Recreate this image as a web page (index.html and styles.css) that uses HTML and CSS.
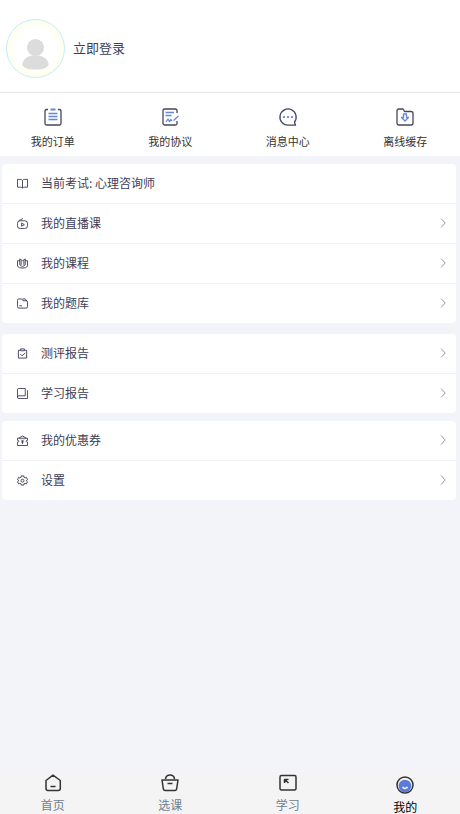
FILE: index.html
```html
<!DOCTYPE html>
<html lang="zh-CN">
<head>
<meta charset="utf-8">
<meta name="viewport" content="width=device-width, initial-scale=1">
<title>我的</title>
<link rel="stylesheet" href="styles.css">
</head>
<body>
<main>
  <header class="profile">
    <span class="avatar">
      <svg viewBox="0 0 60 60" aria-hidden="true"><circle cx="30" cy="29" r="9"/><path d="M16 47c1-7 7-10 14-10s13 3 14 10c-2 4-7 5-14 5s-12-1-14-5z"/></svg>
    </span>
    <a class="login" href="#">立即登录</a>
  </header>

  <nav class="quick">
    <a href="#">
      <svg class="icon" viewBox="0 0 20 20" aria-hidden="true"><path d="M5 2.500H3.500q-1.500 0-1.500 1.500V16.500q0 1.500 1.500 1.500h13q1.500 0 1.500-1.500V4q0-1.500-1.500-1.500H15"/><path class="blue thick" d="M7.500 2.500h5"/><path class="blue" d="M5.500 6.500h9M5.500 9.500h9M5.500 12.500h9"/></svg>
      <span>我的订单</span>
    </a>
    <a href="#">
      <svg class="icon" viewBox="0 0 20 20" aria-hidden="true"><path d="M17 6V3.500q0-1.500-1.500-1.500h-11Q3 2 3 3.500v13Q3 18 4.500 18h11q1.500 0 1.500-1.500V14"/><path class="blue" d="M5.500 5.500h8.500M5.500 8.500h6M6 15l2-3 1.500 2.500 1.500-2L12 14M13.500 13.500l5-4.500"/></svg>
      <span>我的协议</span>
    </a>
    <a href="#">
      <svg class="icon" viewBox="0 0 20 20" aria-hidden="true"><path d="M17.500 18.200H10A8.100 8.100 0 1 1 16.500 15z"/><g class="dots"><circle cx="6" cy="10" r="1.100"/><circle cx="10" cy="10" r="1.100"/><circle cx="14" cy="10" r="1.100"/></g></svg>
      <span>消息中心</span>
    </a>
    <a href="#">
      <svg class="icon" viewBox="0 0 20 20" aria-hidden="true"><path d="M2 4q0-2 2-2h3.500q1 0 1.500 1.500l.5 1H16q2 0 2 2V16q0 2-2 2H4q-2 0-2-2z"/><path class="blue" d="M8.500 7h3v3.500h2L10 14 6.500 10.500h2z"/></svg>
      <span>离线缓存</span>
    </a>
  </nav>

  <div class="groups">
    <section class="card">
      <a class="row" href="#">
        <svg class="glyph" viewBox="0 0 12 12" aria-hidden="true"><path d="M6 2.500Q5 1.500 3.500 1.500H.5v8.500h3Q5 10 6 11q1-1 2.500-1h3V1.500h-3Q7 1.500 6 2.500V11"/></svg>
        <span>当前考试: 心理咨询师</span>
      </a>
      <a class="row" href="#">
        <svg class="glyph" viewBox="0 0 12 12" aria-hidden="true"><rect x=".5" y="3" width="11" height="8.500" rx="3"/><path d="M2 3l4.500-2.500M5 5.500v3.500l3-1.700z"/></svg>
        <span>我的直播课</span>
        <svg class="chevron" viewBox="0 0 6 10" aria-hidden="true"><path d="M1 .5L5.200 5 1 9.500"/></svg>
      </a>
      <a class="row" href="#">
        <svg class="glyph" viewBox="0 0 12 12" aria-hidden="true"><path d="M6 3L3 1v6.500L6 9.500 9 7.500V1L6 3M4.500 2.500v5M7.500 2.500v5M3 3H.5v6Q2 11 6 11t5.500-2V3H9"/></svg>
        <span>我的课程</span>
        <svg class="chevron" viewBox="0 0 6 10" aria-hidden="true"><path d="M1 .5L5.200 5 1 9.500"/></svg>
      </a>
      <a class="row" href="#">
        <svg class="glyph" viewBox="0 0 12 12" aria-hidden="true"><path d="M.5 2.500q0-1.500 1.500-1.500h3l1.500 2H10q1.500 0 1.500 1.500V9.500q0 1.500-1.500 1.500H2Q.5 11 .5 9.500zM6 1h3l2 2.500M2.500 8.500h3"/></svg>
        <span>我的题库</span>
        <svg class="chevron" viewBox="0 0 6 10" aria-hidden="true"><path d="M1 .5L5.200 5 1 9.500"/></svg>
      </a>
    </section>

    <section class="card spaced">
      <a class="row" href="#">
        <svg class="glyph" viewBox="0 0 12 12" aria-hidden="true"><path d="M4 2.500H1.500v8.500h9V2.500H8M4 1h4v2H4zM3.500 6.500l2 2 3.500-3"/></svg>
        <span>测评报告</span>
        <svg class="chevron" viewBox="0 0 6 10" aria-hidden="true"><path d="M1 .5L5.200 5 1 9.500"/></svg>
      </a>
      <a class="row" href="#">
        <svg class="glyph" viewBox="0 0 12 12" aria-hidden="true"><path d="M2 .5h7v8H2q-1.500 0-1.500 1.500T2 11.500h9.500v-9M.5 10V2Q.5.5 2 .5"/></svg>
        <span>学习报告</span>
        <svg class="chevron" viewBox="0 0 6 10" aria-hidden="true"><path d="M1 .5L5.200 5 1 9.500"/></svg>
      </a>
    </section>

    <section class="card">
      <a class="row" href="#">
        <svg class="glyph" viewBox="0 0 12 12" aria-hidden="true"><path d="M.5 3.500h11v2.300q-1.500 0-1.500 1t1.500 1V11.500H.5V7.800q1.500 0 1.500-1t-1.500-1zM2 3.500L6 1l4 2.500M4.500 5L6 6.500 7.500 5M6 6.500V10M4.500 7.500h3"/></svg>
        <span>我的优惠券</span>
        <svg class="chevron" viewBox="0 0 6 10" aria-hidden="true"><path d="M1 .5L5.200 5 1 9.500"/></svg>
      </a>
      <a class="row" href="#">
        <svg class="glyph" viewBox="0 0 12 12" aria-hidden="true"><path d="M4.500 1h3v1.500L9 3.300l1.200-.8L11.500 5l-1.200.8v.8l1.200.8-1.300 2.400L9 9l-1.500.7V11h-3V9.700L3 9l-1.200.8L.5 7.400l1.200-.8v-.8L.5 5l1.300-2.500L3 3.300l1.500-.8z"/><circle cx="6" cy="6.200" r="1.600"/></svg>
        <span>设置</span>
        <svg class="chevron" viewBox="0 0 6 10" aria-hidden="true"><path d="M1 .5L5.200 5 1 9.500"/></svg>
      </a>
    </section>
  </div>
</main>

<nav class="tabs">
  <a href="#">
    <svg class="icon" viewBox="0 0 20 20" aria-hidden="true"><path d="M3 7.500L10 2.200l7.300 5.300v8q0 2-2 2H5q-2 0-2-2zM7.500 13.500h5"/></svg>
    <span>首页</span>
  </a>
  <a href="#">
    <svg class="icon" viewBox="0 0 20 20" aria-hidden="true"><path d="M2 7h16l-1.300 8.500q-.2 2-2 2H5.300q-1.800 0-2-2zM5.500 6Q6 2 10 2t4.500 4M7.500 10.500h5"/></svg>
    <span>选课</span>
  </a>
  <a href="#">
    <svg class="icon" viewBox="0 0 20 20" aria-hidden="true"><rect x="2" y="2.500" width="16" height="14.500" rx="1.500"/><path d="M6.500 10V6.500H10.500M6.500 6.500L10.500 10"/></svg>
    <span>学习</span>
  </a>
  <a class="active" href="#" aria-current="page">
    <svg class="icon" viewBox="0 0 20 20" aria-hidden="true"><circle cx="10" cy="10" r="8"/><circle class="face" cx="10" cy="11" r="6.300"/><path class="smile" d="M7.500 12Q10 15 12.500 12"/></svg>
    <span>我的</span>
  </a>
</nav>
</body>
</html>
```
FILE: styles.css
```css
* {
  box-sizing: border-box;
}

body {
  margin: 0;
  min-height: 100vh;
  display: flex;
  flex-direction: column;
  background: #f3f4f9;
  color: #3d3d56;
  font-family: "Noto Sans CJK SC", sans-serif;
  font-size: 12px;
  line-height: 18px;
}

main {
  flex: 1;
}

a {
  color: inherit;
  text-decoration: none;
}

svg {
  display: block;
  fill: none;
  stroke: currentColor;
  stroke-linejoin: round;
}

.profile {
  display: flex;
  align-items: center;
  gap: 8px;
  padding: 19px 6px 14px;
  background: #fff;
  border-bottom: 1px solid #e5e5e5;
}

.avatar {
  width: 59px;
  height: 59px;
  border: 1px solid #c4ecfa;
  border-radius: 50%;
  background: radial-gradient(circle, #fff 50%, #fffff0 66%);
}

.avatar svg {
  fill: #dcdcdc;
  stroke: none;
}

.login {
  padding-bottom: 2px;
  font-size: 13px;
}

.quick,
.tabs {
  display: grid;
  grid-template-columns: repeat(4, 1fr);
  gap: 12px;
  padding-right: 2px;
}

.quick a,
.tabs a {
  display: flex;
  flex-direction: column;
  align-items: center;
}

.quick {
  padding-top: 14px;
  padding-bottom: 7px;
  background: #fff;
  font-size: 11px;
  line-height: 16px;
  color: #333;
}

.quick a {
  gap: 6px;
}

.icon {
  width: 20px;
  height: 20px;
}

.quick .icon {
  color: #45455f;
  stroke-width: 1.3;
}

.icon .blue {
  stroke: #6685dc;
}

.icon .thick {
  stroke-width: 2;
}

.icon .dots {
  fill: #5577dd;
  stroke: none;
}

.groups {
  display: flex;
  flex-direction: column;
  gap: 8px;
  padding: 8px 4px 8px 2px;
}

.card {
  overflow: hidden;
  border-radius: 4px;
  background: #fff;
}

.spaced {
  margin-top: 3px;
}

.row {
  display: flex;
  align-items: center;
  gap: 13px;
  min-height: 39px;
  padding: 0 10px 1px 15px;
}

.row + .row {
  border-top: 1px solid #f2f2f5;
  min-height: 40px;
}

.glyph {
  width: 11px;
  height: 11px;
}

.chevron {
  width: 6px;
  height: 10px;
  margin-left: auto;
  color: #999;
}

.tabs {
  padding-top: 4px;
  background: #f4f4f4;
  color: #708090;
  line-height: 14px;
}

.tabs a {
  gap: 5px;
}

.tabs .icon {
  color: #333;
  stroke-width: 1.5;
}

.tabs .active {
  padding-top: 2px;
  color: #000;
}

.icon .face {
  fill: #5b7bd8;
  stroke: none;
}

.icon .smile {
  stroke: #fff;
}
```
